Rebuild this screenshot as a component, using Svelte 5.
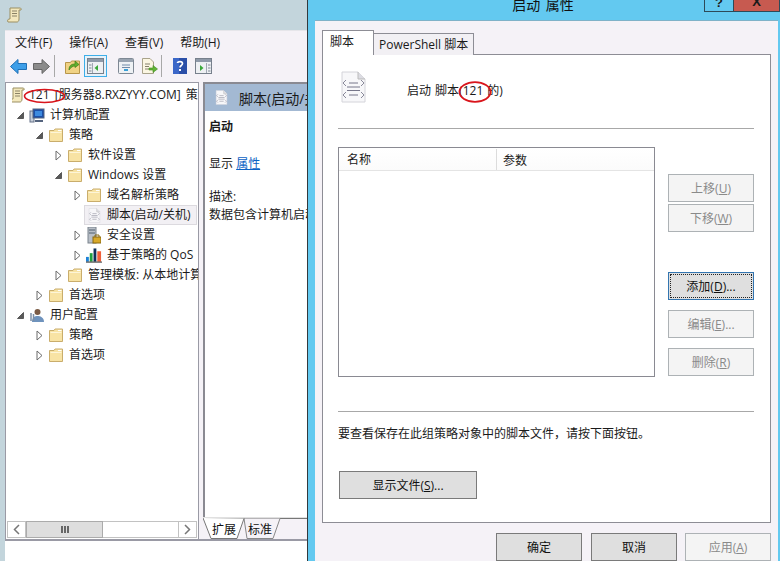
<script>
  const tree = [
    { level: 0, arrow: '', icon: 'scroll', label: '121 [服务器8.RXZYYY.COM] 策略' },
    { level: 0, arrow: 'open', icon: 'computer', label: '计算机配置' },
    { level: 1, arrow: 'open', icon: 'folder', label: '策略' },
    { level: 2, arrow: 'closed', icon: 'folder', label: '软件设置' },
    { level: 2, arrow: 'open', icon: 'folder', label: 'Windows 设置' },
    { level: 3, arrow: 'closed', icon: 'folder', label: '域名解析策略' },
    { level: 3, arrow: '', icon: 'script', label: '脚本(启动/关机)', selected: true },
    { level: 3, arrow: 'closed', icon: 'lock', label: '安全设置' },
    { level: 3, arrow: 'closed', icon: 'chart', label: '基于策略的 QoS' },
    { level: 2, arrow: 'closed', icon: 'folder', label: '管理模板: 从本地计算机' },
    { level: 1, arrow: 'closed', icon: 'folder', label: '首选项' },
    { level: 0, arrow: 'open', icon: 'user', label: '用户配置' },
    { level: 1, arrow: 'closed', icon: 'folder', label: '策略' },
    { level: 1, arrow: 'closed', icon: 'folder', label: '首选项' }
  ];
  const menus = ['文件(F)', '操作(A)', '查看(V)', '帮助(H)'];
</script>

{#snippet scriptIcon(w, h)}
  <svg class="script-icon" width={w} height={h} viewBox="0 0 25 32">
    <path d="M1 1H17L24 8V31H1Z" fill="#f7f7f9" stroke="#d4d4da" />
    <path d="M17 1V8H24" fill="#dcdce2" stroke="#bbb" />
    <path d="M5 9L2 12L5 15M20 9L23 12L20 15M5 21L2 24L5 27M20 21L23 24L20 27" fill="none" stroke="#8a8a9a" />
    <path d="M8 12H17M6 16H19M6 19.500H19M8 24H17" stroke="#77778a" />
  </svg>
{/snippet}

{#snippet scrollIcon()}
  <svg width="15" height="16" viewBox="0 0 15 16">
    <path d="M3 1H13C14 1 14.500 2 14 3H12V12C12 14 11 15 10 15H1C0 14 1 12 2 12H3Z" fill="#f3e8bd" stroke="#9b8f63" />
    <path d="M5 4H10M5 6.500H10M5 9H10" stroke="#8a8266" />
  </svg>
{/snippet}

{#snippet folderIcon()}
  <svg width="15" height="15" viewBox="0 0 15 15">
    <path d="M.5 2.500H5L6 1H13.500V13.500H.5Z" fill="#f8e3a4" stroke="#c9ad6c" />
    <path d="M1.500 4.500H12.500" stroke="#fdf5d8" />
    <path d="M9 2.500H12.500" stroke="#fff" />
  </svg>
{/snippet}

{#snippet treeIcon(name)}
  {#if name === 'folder'}
    {@render folderIcon()}
  {:else if name === 'scroll'}
    {@render scrollIcon()}
  {:else if name === 'script'}
    {@render scriptIcon(13, 15)}
  {:else if name === 'computer'}
    <svg width="16" height="15" viewBox="0 0 16 15">
      <rect x="1" y="3" width="4" height="11" fill="#c5cdd8" stroke="#66738a" />
      <rect x="4" y="1" width="11" height="9" fill="#1c4fa8" stroke="#55647e" />
      <rect x="6" y="3" width="7" height="5" fill="#3d8be0" />
      <path d="M6 13H14" stroke="#55647e" stroke-width="2" />
    </svg>
  {:else if name === 'user'}
    <svg width="16" height="15" viewBox="0 0 16 15">
      <circle cx="8.500" cy="4" r="3" fill="#7a5b45" />
      <path d="M3 14C3 9 6 8 8.500 8S15 9 15 14Z" fill="#6f93bd" />
      <path d="M2 5V13M4.500 6V13" stroke="#7c8ea5" stroke-width="1.500" />
    </svg>
  {:else if name === 'lock'}
    <svg width="14" height="17" viewBox="0 0 14 17">
      <rect x="1" y="0" width="8" height="16" fill="#b9bfc7" stroke="#7b838d" />
      <path d="M2 3H8M2 6H8" stroke="#50606f" />
      <rect x="6" y="10" width="8" height="6" fill="#d8a92a" stroke="#8a6a12" />
      <path d="M8 10V8H12V10" fill="none" stroke="#8a6a12" />
    </svg>
  {:else if name === 'chart'}
    <svg width="17" height="15" viewBox="0 0 17 15">
      <rect x="0" y="9" width="3" height="5" fill="#1c82d8" />
      <rect x="4" y="5" width="3" height="9" fill="#20a040" />
      <rect x="8" y="0" width="3" height="14" fill="#10305a" />
      <rect x="12" y="3" width="4" height="11" fill="#f0603a" />
      <path d="M0 14.500H17" stroke="#222" />
    </svg>
  {/if}
{/snippet}

<div class="desktop">
  <section class="mmc">
    <div class="mmc-title">{@render scrollIcon()}</div>
    <div class="mmc-client">
      <nav class="menubar">
        {#each menus as m}
          <span>{m}</span>
        {/each}
      </nav>

      <div class="toolbar">
        <svg class="back" width="17" height="15" viewBox="0 0 17 15">
          <path d="M.5 7.500L8 .5V4.500H16.500V10.500H8V14.500Z" fill="#3d9ee8" stroke="#1f6fb5" />
        </svg>
        <svg class="forward" width="17" height="15" viewBox="0 0 17 15">
          <path d="M16.500 7.500L9 .5V4.500H.5V10.500H9V14.500Z" fill="#8b8b8b" stroke="#666" />
        </svg>
        <i class="tool-sep"></i>
        <svg class="up" width="15" height="15" viewBox="0 0 15 15">
          <path d="M.5 3.500H5.500L6.500 2H14.500V14.500H.5Z" fill="#f0d284" stroke="#b8964a" />
          <path d="M4 11C4 6 7 5 10 5V2L14 5.500L10 8.500V7C8 7 6 8 4 11Z" fill="#5fae2e" stroke="#3f7f18" stroke-width=".7" />
        </svg>
        <span class="tool-active">
          <svg width="17" height="16" viewBox="0 0 17 16">
            <rect x=".5" y=".5" width="16" height="15" fill="#eef0f3" stroke="#77808c" />
            <rect x="1" y="1" width="15" height="3" fill="#8e99a8" />
            <path d="M5.500 5V15" stroke="#a0a8b3" />
            <path d="M2 7H4.500M2 10H4.500M2 13H4.500" stroke="#7e8894" />
            <path d="M11 7V13L7.500 10Z" fill="#3aa83a" />
          </svg>
        </span>
        <svg class="props" width="16" height="16" viewBox="0 0 16 16">
          <rect x=".5" y=".5" width="15" height="15" rx="1" fill="#eef1f4" stroke="#7e8894" />
          <rect x="1" y="1" width="14" height="3" fill="#98a3b0" />
          <path d="M4 7H12M4 9.500H12" stroke="#6f8aa8" />
          <path d="M6 12H10" stroke="#38a0d8" stroke-width="2" />
        </svg>
        <svg class="export" width="17" height="16" viewBox="0 0 17 16">
          <path d="M1.500 .5H9L12.500 4V15.500H1.500Z" fill="#fbf6e2" stroke="#a9a38b" />
          <path d="M4 6H9M4 8.500H8M4 11H8" stroke="#85806c" />
          <path d="M8 10H12V7.500L16.500 11L12 14.500V12H8Z" fill="#62b437" stroke="#3f8a1d" stroke-width=".6" />
        </svg>
        <i class="tool-sep second"></i>
        <svg class="helpicon" width="14" height="16" viewBox="0 0 14 16">
          <rect width="14" height="16" fill="#2b4fa8" />
          <rect x="0" y="0" width="6" height="16" fill="#3b67c8" />
          <path d="M4.500 5C4.500 3 9.500 3 9.500 5.500C9.500 7.500 7 7.500 7 9.500" fill="none" stroke="#fff" stroke-width="1.700" />
          <rect x="6" y="11" width="2" height="2" fill="#fff" />
        </svg>
        <svg class="action" width="17" height="16" viewBox="0 0 17 16">
          <rect x=".5" y=".5" width="16" height="15" fill="#eef0f3" stroke="#77808c" />
          <rect x="1" y="1" width="15" height="3" fill="#8e99a8" />
          <path d="M11.500 5V15" stroke="#a0a8b3" />
          <path d="M13 7H15.500M13 10H15.500M13 13H15.500" stroke="#7e8894" />
          <path d="M5 7V13L8.500 10Z" fill="#3aa83a" />
        </svg>
      </div>

      <div class="panes">
        <div class="tree-pane">
          <ul class="tree">
            {#each tree as row}
              <li class="row" style="padding-left: {row.level * 19}px">
                <span class="arrow">
                  {#if row.arrow === 'closed'}
                    <svg width="7" height="11" viewBox="0 0 7 11"><path d="M1 1L6 5.500L1 10Z" fill="#fff" stroke="#6b6b6b" /></svg>
                  {:else if row.arrow === 'open'}
                    <svg width="7" height="7" viewBox="0 0 7 7"><path d="M6.500 .5V6.500H.5Z" fill="#595959" stroke="#595959" /></svg>
                  {/if}
                </span>
                <span class="item" class:selected={row.selected}>
                  <span class="row-icon">{@render treeIcon(row.icon)}</span>
                  <span class="label">{row.label}</span>
                </span>
              </li>
            {/each}
          </ul>
          <div class="hscroll">
            <span class="sb-btn">
              <svg width="7" height="11" viewBox="0 0 7 11"><path d="M6 1L1.500 5.500L6 10" fill="none" stroke="#777" stroke-width="1.500" /></svg>
            </span>
            <span class="sb-thumb"><i></i><i></i><i></i></span>
            <span class="sb-track"></span>
            <span class="sb-btn">
              <svg width="7" height="11" viewBox="0 0 7 11"><path d="M1 1L5.500 5.500L1 10" fill="none" stroke="#777" stroke-width="1.500" /></svg>
            </span>
          </div>
        </div>

        <div class="detail-pane">
          <div class="detail">
            <div class="detail-head">
              {@render scriptIcon(13, 15)}
              <span>脚本(启动/关机)</span>
            </div>
            <div class="detail-body">
              <p class="strong">启动</p>
              <p class="show">显示 <a href="#props">属性</a></p>
              <p class="desc">描述:</p>
              <p class="desc-text">数据包含计算机启动脚本</p>
            </div>
          </div>
          <div class="view-tabs">
            <svg class="view-tabs-bg" width="104" height="21" viewBox="0 0 104 21">
              <path d="M0 .5H104" stroke="#777" />
              <path d="M41 .5L44 20.500H70L77 .5" fill="#f5f2f7" stroke="#888" />
              <path d="M0 0L8 20.500H34L41 .5" fill="#fff" stroke="#777" />
            </svg>
            <span class="view-tab">扩展</span>
            <span class="view-tab">标准</span>
          </div>
        </div>
      </div>
      <div class="statusbar"></div>
    </div>
  </section>

  <section class="dialog">
    <header class="dialog-title">
      <h1>启动 属性</h1>
      <div class="caption-btns">
        <span class="cap help">?</span>
        <span class="cap close">X</span>
      </div>
    </header>
    <div class="dialog-client">
      <div class="tabs">
        <span class="tab active">脚本</span>
        <span class="tab">PowerShell 脚本</span>
      </div>
      <div class="tab-page">
        <div class="page-head">
          {@render scriptIcon(25, 32)}
          <span>启动 脚本(121 的)</span>
        </div>
        <hr class="rule-top" />
        <div class="list-area">
          <div class="listbox">
            <div class="list-header">
              <span class="col-name">名称</span>
              <span class="col-args">参数</span>
            </div>
          </div>
          <div class="side-btns">
            <button class="btn" disabled>上移(<u>U</u>)</button>
            <button class="btn" disabled>下移(<u>W</u>)</button>
            <button class="btn focus"><span>添加(<u>D</u>)...</span></button>
            <button class="btn" disabled>编辑(<u>E</u>)...</button>
            <button class="btn" disabled>删除(<u>R</u>)</button>
          </div>
        </div>
        <hr class="rule-bottom" />
        <p class="hint">要查看保存在此组策略对象中的脚本文件，请按下面按钮。</p>
        <button class="btn show-files">显示文件(<u>S</u>)...</button>
      </div>
      <div class="dialog-actions">
        <button class="btn">确定</button>
        <button class="btn">取消</button>
        <button class="btn" disabled>应用(<u>A</u>)</button>
      </div>
    </div>
  </section>

  <svg class="marks" width="780" height="561" viewBox="0 0 780 561">
    <ellipse cx="44.500" cy="96" rx="20" ry="6.500" fill="none" stroke="#d9151c" stroke-width="1.600" />
    <ellipse cx="475" cy="92" rx="15.500" ry="9.800" fill="none" stroke="#d9151c" stroke-width="1.800" />
  </svg>
</div>

<style>
  :global(body) {
    margin: 0;
    font-family: "Open Sans", "Noto Sans CJK SC", sans-serif;
    font-size: 12px;
    color: #1a1a1a;
  }

  .desktop {
    position: relative;
    width: 780px;
    height: 561px;
    overflow: hidden;
    background: #c3d5dc;
  }

  /* left mmc window */
  .mmc {
    position: absolute;
    left: 0;
    top: 0;
    width: 308px;
    height: 561px;
    display: flex;
    flex-direction: column;
  }

  .mmc-title {
    height: 30px;
    box-sizing: border-box;
    padding: 7px 0 0 7px;
  }

  .mmc-client {
    flex: 1;
    min-height: 0;
    margin-left: 5px;
    background: #f5f2f7;
    display: flex;
    flex-direction: column;
  }

  .menubar {
    height: 22px;
    display: flex;
    align-items: center;
    gap: 17px;
    padding-left: 10px;
    border-top: 1px solid #e6e6ea;
    box-sizing: border-box;
  }

  .toolbar {
    height: 30px;
    display: flex;
    align-items: center;
    padding-bottom: 2px;
    box-sizing: border-box;
  }

  .toolbar svg {
    flex: none;
  }

  .back { margin-left: 5px; }
  .forward { margin-left: 6px; }
  .up { margin-left: 4px; }
  .props { margin-left: 11px; }
  .export { margin-left: 7px; }
  .helpicon { margin-left: 5px; }
  .action { margin-left: 8px; }

  .tool-sep {
    width: 1px;
    height: 22px;
    background: #a8a8a8;
    margin: 0 6px 0 4px;
  }

  .tool-sep.second {
    margin-left: 3px;
  }

  .tool-active {
    width: 23px;
    height: 22px;
    box-sizing: border-box;
    margin-left: 4px;
    display: flex;
    align-items: center;
    justify-content: center;
    background: #e6f2fa;
    border: 1px solid #3daee9;
  }

  .panes {
    height: 459px;
    display: flex;
    border-bottom: 2px solid #9a9aa5;
    box-sizing: border-box;
  }

  .tree-pane {
    width: 194px;
    box-sizing: border-box;
    background: #fff;
    border-left: 1px solid #9a9aa5;
    border-top: 1px solid #9a9aa5;
    border-right: 1px solid #9a9aa5;
    display: flex;
    flex-direction: column;
  }

  .tree {
    flex: 1;
    min-height: 0;
    list-style: none;
    margin: 0;
    padding: 2px 0 0 6px;
    overflow: hidden;
  }

  .row {
    height: 20px;
    display: flex;
    align-items: center;
    white-space: nowrap;
    overflow: hidden;
  }

  .arrow {
    flex: none;
    width: 17px;
    display: flex;
    justify-content: flex-end;
    padding-right: 5px;
    box-sizing: border-box;
  }

  .row:first-child .arrow {
    width: 0;
    padding: 0;
    margin-left: -3px;
  }

  .row:first-child .label {
    margin-left: 4px;
    word-spacing: 2px;
  }

  .item {
    flex: 1;
    min-width: 0;
    display: flex;
    align-items: center;
    height: 20px;
    box-sizing: border-box;
  }

  .item.selected {
    margin: 0 1px 0 -2px;
    padding-left: 1px;
    background: #f2f0f4;
    border: 1px solid #dcdadf;
  }

  .row-icon {
    flex: none;
    width: 16px;
    display: flex;
    justify-content: center;
  }

  .label {
    margin-left: 5px;
    line-height: 18px;
  }

  .hscroll {
    height: 17px;
    margin: 0 0 1px 1px;
    width: 190px;
    display: flex;
    border: 1px solid #c2c2c2;
    box-sizing: border-box;
    background: #fff;
  }

  .sb-btn {
    width: 17px;
    display: flex;
    align-items: center;
    justify-content: center;
  }

  .sb-btn:first-child {
    border-right: 1px solid #c2c2c2;
  }

  .sb-btn:last-child {
    border-left: 1px solid #c2c2c2;
  }

  .sb-thumb {
    width: 75px;
    background: #dedede;
    border: 1px solid #ababab;
    margin: -1px 0;
    display: flex;
    align-items: center;
    justify-content: center;
    gap: 1px;
  }

  .sb-thumb i {
    width: 2px;
    height: 7px;
    background: #666;
  }

  .sb-track {
    flex: 1;
  }

  .detail-pane {
    flex: 1;
    min-width: 0;
    margin-left: 4px;
    display: flex;
    flex-direction: column;
    overflow: hidden;
  }

  .detail {
    flex: 1;
    min-height: 0;
    background: #fff;
    border-left: 2px solid #8a8a92;
    border-top: 2px solid #8a8a92;
    overflow: hidden;
  }

  .detail-head {
    height: 27px;
    background: #a3b9d3;
    display: flex;
    align-items: center;
    gap: 11px;
    padding-left: 10px;
    font-size: 14px;
    white-space: nowrap;
  }

  .script-icon {
    flex: none;
  }

  .detail-body {
    padding-left: 4px;
    white-space: nowrap;
  }

  .detail-body p {
    margin: 0;
    line-height: 18px;
  }

  .strong {
    font-weight: 700;
    padding-top: 7px;
  }

  .show {
    margin-top: 19px !important;
  }

  .show a {
    color: #0b62c4;
  }

  .desc {
    margin-top: 15px !important;
  }

  .view-tabs {
    position: relative;
    height: 21px;
    padding-left: 9px;
    display: flex;
    gap: 12px;
    align-items: center;
    background: #f5f2f7;
    border-top: 1px solid #e0e0e0;
  }

  .view-tabs-bg {
    position: absolute;
    left: 0;
    top: 0;
  }

  .view-tab {
    position: relative;
    color: #111;
  }

  .statusbar {
    flex: 1;
    background: #fff;
  }

  /* right properties dialog */
  .dialog {
    position: absolute;
    left: 307px;
    top: 0;
    width: 473px;
    height: 561px;
    box-sizing: border-box;
    border-left: 1px solid #33393d;
    background: #63c9f0;
    display: flex;
    flex-direction: column;
  }

  .dialog-title {
    position: relative;
    height: 20px;
    flex: none;
  }

  .dialog-title h1 {
    margin: -5px 0 0;
    font-size: 14px;
    font-weight: 400;
    line-height: 20px;
    text-align: center;
    padding-right: 2px;
    word-spacing: 2px;
    color: #111;
  }

  .caption-btns {
    position: absolute;
    top: 0;
    right: 0;
    height: 12px;
    display: flex;
    overflow: hidden;
  }

  .cap {
    height: 12px;
    box-sizing: border-box;
    border: 1px solid #2d4a58;
    border-top: 0;
    font-family: "Liberation Sans", sans-serif;
    font-weight: 700;
    font-size: 13px;
    line-height: 1;
    text-align: center;
    overflow: hidden;
  }

  .help {
    width: 29px;
    border-right: 0;
    line-height: 6px;
  }

  .close {
    width: 47px;
    background: #c75a50;
    line-height: 4px;
  }

  .dialog-client {
    flex: 1;
    margin: 0 2px 0 7px;
    background: #f5f2f7;
    border-top: 1px solid #7fb2c8;
    padding: 9px 7px 0 7px;
    min-height: 0;
  }

  .tabs {
    display: flex;
    align-items: flex-end;
    height: 25px;
    position: relative;
    z-index: 1;
    margin-bottom: -1px;
  }

  .tab {
    height: 22px;
    box-sizing: border-box;
    border: 1px solid #8d8d95;
    border-bottom: 0;
    background: #f2f0f4;
    padding: 0 5px;
    line-height: 22px;
  }

  .tab.active {
    width: 52px;
    height: 25px;
    background: #fff;
    border-right: 1px solid #8d8d95;
    margin-right: -1px;
    padding-left: 7px;
    line-height: 21px;
  }

  .tab-page {
    height: 469px;
    box-sizing: border-box;
    background: #fff;
    border: 1px solid #8d8d95;
    padding: 16px 16px 0 15px;
  }

  .page-head {
    display: flex;
    align-items: center;
    height: 32px;
    padding-left: 3px;
    gap: 41px;
    word-spacing: 1px;
  }

  .page-head span {
    padding-top: 6px;
  }

  hr {
    border: 0;
    height: 1px;
    background: #a8a8a8;
    margin: 0;
  }

  .rule-top {
    margin-top: 25px;
  }

  .list-area {
    margin-top: 18px;
    display: flex;
    gap: 13px;
  }

  .listbox {
    width: 317px;
    height: 230px;
    box-sizing: border-box;
    border: 1px solid #8a8a92;
    padding-top: 1px;
  }

  .list-header {
    height: 21px;
    display: flex;
    align-items: center;
    border-bottom: 1px solid #e4e4e4;
    background: linear-gradient(#fff, #fbfbfb);
  }

  .col-name {
    width: 158px;
    padding-left: 8px;
    box-sizing: border-box;
    height: 100%;
    line-height: 21px;
    border-right: 1px solid #dcdcdc;
  }

  .col-args {
    padding-left: 6px;
  }

  .side-btns {
    display: flex;
    flex-direction: column;
    gap: 2px;
    padding-top: 27px;
  }

  .btn {
    width: 86px;
    height: 28px;
    padding: 0;
    flex: none;
    box-sizing: border-box;
    background: #dfdfdf;
    border: 1px solid #7a7a7a;
    font: inherit;
    color: #111;
  }

  .btn:disabled {
    background: #f4f4f4;
    border-color: #adb2b5;
    color: #8a8a8a;
  }

  .side-btns .btn:nth-child(3) {
    margin-top: 38px;
  }

  .side-btns .btn:nth-child(4),
  .side-btns .btn:nth-child(5) {
    margin-top: 8px;
  }

  .btn.focus {
    border-color: #3375b0;
    padding: 1px;
  }

  .btn.focus span {
    display: flex;
    align-items: center;
    justify-content: center;
    height: 100%;
    border: 1px dotted #222;
    box-sizing: border-box;
  }

  .rule-bottom {
    margin-top: 34px;
  }

  .hint {
    margin: 13px 0 0;
    line-height: 18px;
  }

  .show-files {
    display: block;
    width: 138px;
    margin: 28px 0 0 1px;
  }

  .dialog-actions {
    display: flex;
    justify-content: flex-end;
    gap: 8px;
    padding-top: 10px;
  }

  .dialog-actions .btn:first-child {
    margin-right: 1px;
  }

  .marks {
    position: absolute;
    left: 0;
    top: 0;
    pointer-events: none;
  }
</style>
